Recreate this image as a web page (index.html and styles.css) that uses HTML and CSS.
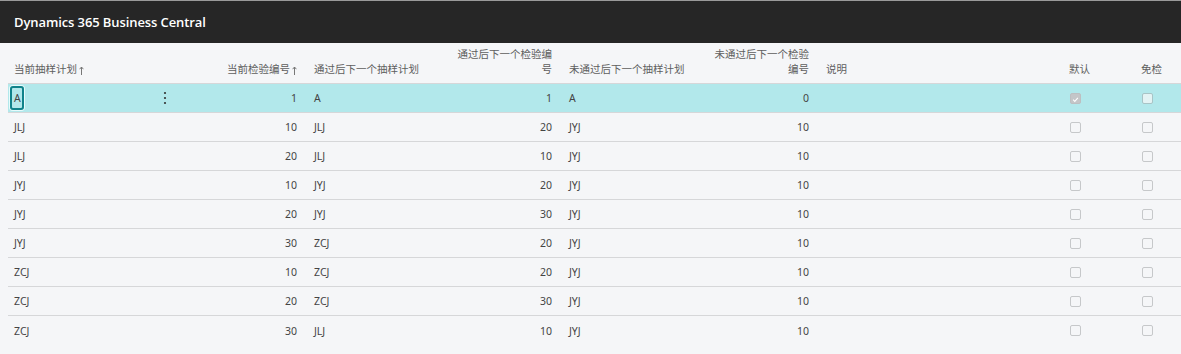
FILE: index.html
```html
<!DOCTYPE html>
<html lang="zh">
<head>
<meta charset="utf-8">
<title>Dynamics 365 Business Central</title>
<link rel="stylesheet" href="styles.css">
</head>
<body>
<header class="appbar">
  <span class="brand">Dynamics 365 Business Central</span>
</header>
<main class="page">
  <div class="grid">
    <div class="row head">
      <div class="cell">当前抽样计划<svg class="sort" viewBox="0 0 5 9" width="5" height="9"><path d="M2.5 1v8M0.6 3.2L2.5 1l1.9 2.2" fill="none" stroke="#777" stroke-width="1"/></svg></div>
      <div class="cell"></div>
      <div class="cell num">当前检验编号<svg class="sort" viewBox="0 0 5 9" width="5" height="9"><path d="M2.5 1v8M0.6 3.2L2.5 1l1.9 2.2" fill="none" stroke="#777" stroke-width="1"/></svg></div>
      <div class="cell">通过后下一个抽样计划</div>
      <div class="cell num">通过后下一个检验编号</div>
      <div class="cell">未通过后下一个抽样计划</div>
      <div class="cell num">未通过后下一个检验编号</div>
      <div class="cell">说明</div>
      <div class="cell">默认</div>
      <div class="cell">免检</div>
    </div>

    <div class="row selected">
      <div class="cell"><span class="focus">A</span></div>
      <div class="cell menu"><svg viewBox="0 0 4 14" width="4" height="14"><circle cx="2" cy="2" r="1.1" fill="#333"/><circle cx="2" cy="7" r="1.1" fill="#333"/><circle cx="2" cy="12" r="1.1" fill="#333"/></svg></div>
      <div class="cell num">1</div>
      <div class="cell">A</div>
      <div class="cell num">1</div>
      <div class="cell">A</div>
      <div class="cell num">0</div>
      <div class="cell"></div>
      <div class="cell chk"><span class="box checked"><svg viewBox="0 0 11 11" width="11" height="11"><path d="M2.6 5.8l2 2 3.8-4.4" fill="none" stroke="#fff" stroke-width="1.3"/></svg></span></div>
      <div class="cell chk"><span class="box light"></span></div>
    </div>

    <div class="row">
      <div class="cell">JLJ</div><div class="cell"></div>
      <div class="cell num">10</div><div class="cell">JLJ</div>
      <div class="cell num">20</div><div class="cell">JYJ</div>
      <div class="cell num">10</div><div class="cell"></div>
      <div class="cell chk"><span class="box"></span></div><div class="cell chk"><span class="box"></span></div>
    </div>
    <div class="row">
      <div class="cell">JLJ</div><div class="cell"></div>
      <div class="cell num">20</div><div class="cell">JLJ</div>
      <div class="cell num">10</div><div class="cell">JYJ</div>
      <div class="cell num">10</div><div class="cell"></div>
      <div class="cell chk"><span class="box"></span></div><div class="cell chk"><span class="box"></span></div>
    </div>
    <div class="row">
      <div class="cell">JYJ</div><div class="cell"></div>
      <div class="cell num">10</div><div class="cell">JYJ</div>
      <div class="cell num">20</div><div class="cell">JYJ</div>
      <div class="cell num">10</div><div class="cell"></div>
      <div class="cell chk"><span class="box"></span></div><div class="cell chk"><span class="box"></span></div>
    </div>
    <div class="row">
      <div class="cell">JYJ</div><div class="cell"></div>
      <div class="cell num">20</div><div class="cell">JYJ</div>
      <div class="cell num">30</div><div class="cell">JYJ</div>
      <div class="cell num">10</div><div class="cell"></div>
      <div class="cell chk"><span class="box"></span></div><div class="cell chk"><span class="box"></span></div>
    </div>
    <div class="row">
      <div class="cell">JYJ</div><div class="cell"></div>
      <div class="cell num">30</div><div class="cell">ZCJ</div>
      <div class="cell num">20</div><div class="cell">JYJ</div>
      <div class="cell num">10</div><div class="cell"></div>
      <div class="cell chk"><span class="box"></span></div><div class="cell chk"><span class="box"></span></div>
    </div>
    <div class="row">
      <div class="cell">ZCJ</div><div class="cell"></div>
      <div class="cell num">10</div><div class="cell">ZCJ</div>
      <div class="cell num">20</div><div class="cell">JYJ</div>
      <div class="cell num">10</div><div class="cell"></div>
      <div class="cell chk"><span class="box"></span></div><div class="cell chk"><span class="box"></span></div>
    </div>
    <div class="row">
      <div class="cell">ZCJ</div><div class="cell"></div>
      <div class="cell num">20</div><div class="cell">ZCJ</div>
      <div class="cell num">30</div><div class="cell">JYJ</div>
      <div class="cell num">10</div><div class="cell"></div>
      <div class="cell chk"><span class="box"></span></div><div class="cell chk"><span class="box"></span></div>
    </div>
    <div class="row last">
      <div class="cell">ZCJ</div><div class="cell"></div>
      <div class="cell num">30</div><div class="cell">JLJ</div>
      <div class="cell num">10</div><div class="cell">JYJ</div>
      <div class="cell num">10</div><div class="cell"></div>
      <div class="cell chk"><span class="box"></span></div><div class="cell chk"><span class="box"></span></div>
    </div>
  </div>
</main>
</body>
</html>
```

FILE: styles.css
```css
html, body {
  margin: 0;
  padding: 0;
}
body {
  background: #f5f6f8;
  font-family: "Noto Sans", "Noto Sans CJK SC", sans-serif;
  color: #444;
  width: 1181px;
  height: 354px;
  overflow: hidden;
}
.appbar {
  height: 43px;
  background: #262626;
  border-top: 1px solid #9a9a9a;
  box-sizing: border-box;
  display: flex;
  align-items: center;
  padding-left: 14px;
}
.brand {
  color: #fff;
  font-family: "Open Sans", "Noto Sans", sans-serif;
  font-weight: 600;
  font-size: 13px;
  letter-spacing: -0.1px;
}
.page {
  padding-left: 8px;
}
.grid {
  display: flex;
  flex-direction: column;
}
.row {
  display: grid;
  grid-template-columns: 138px 39px 120px 139px 116px 141px 116px 243px 72px 1fr;
  height: 29px;
  box-sizing: border-box;
  border-bottom: 1px solid #d6d7d9;
  font-size: 10.5px;
}
.row.last {
  border-bottom: none;
}
.cell {
  display: flex;
  align-items: center;
  padding: 0 8px 0 9px;
  min-width: 0;
  white-space: nowrap;
}
.cell:first-child {
  padding-left: 6px;
}
.cell.num {
  justify-content: flex-end;
  text-align: right;
}
.head {
  height: 41px;
  color: #5e5e5e;
}
.head .cell {
  align-items: flex-end;
  padding-bottom: 6px;
  line-height: 15px;
  white-space: normal;
}
.head .sort {
  margin-left: 2px;
  margin-bottom: 2px;
  flex: none;
}
.selected {
  background: #b2e8eb;
}
.focus {
  display: inline-flex;
  align-items: center;
  height: 24px;
  box-sizing: border-box;
  border: 2px solid #10828a;
  border-radius: 3px;
  padding: 0 1px 0 2px;
  margin-left: -4px;
  box-shadow: 0 0 0 1px #e8fbfc;
}
.menu {
  justify-content: center;
  padding: 0;
}
.menu svg {
  margin-left: -1px;
}
.chk {
  padding-left: 10px;
}
.box {
  width: 11px;
  height: 11px;
  box-sizing: border-box;
  border: 1px solid #c6c8ca;
  border-radius: 2px;
  display: inline-flex;
}
.box.checked {
  background: #c4c6c8;
  border-color: #bdbfc1;
}
.box.light {
  background: #e3f3f4;
  border-color: #a8c4c6;
}
```
